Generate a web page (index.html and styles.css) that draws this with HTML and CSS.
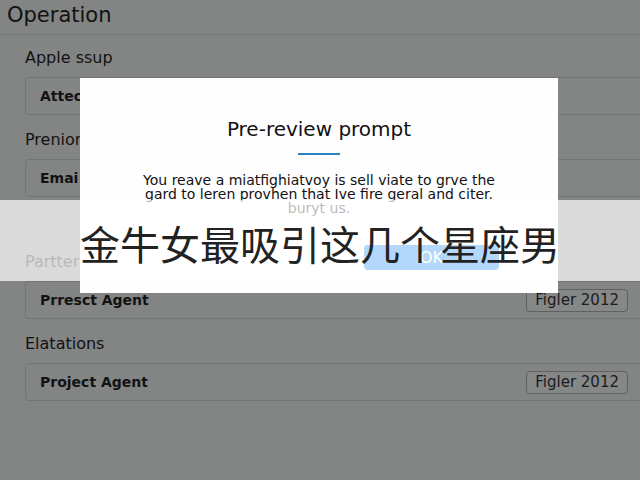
FILE: index.html
```html
<!DOCTYPE html>
<html lang="en">
<head>
    <meta charset="UTF-8">
    <meta name="viewport" content="width=device-width, initial-scale=1.0">
    <title>Operation</title>
    <link rel="stylesheet" href="styles.css">
</head>
<body>
    <header class="page-header">
        <h1>Operation</h1>
    </header>
    <form class="operation-form">
        <div class="form-group">
            <label for="apple">Apple ssup</label>
            <div class="field">
                <input type="text" id="apple" value="Attec">
            </div>
        </div>
        <div class="form-group">
            <label for="prenior">Prenior</label>
            <div class="field">
                <input type="text" id="prenior" value="Emai">
            </div>
        </div>
        <div class="form-group spaced">
            <label for="partter">Partter</label>
            <div class="field">
                <input type="text" id="partter" value="Prresct Agent">
                <button type="button" class="tag">Figler 2012</button>
            </div>
        </div>
        <div class="form-group">
            <label for="elatations">Elatations</label>
            <div class="field">
                <input type="text" id="elatations" value="Project Agent">
                <button type="button" class="tag">Figler 2012</button>
            </div>
        </div>
    </form>

    <div class="dialog" role="dialog" aria-labelledby="dialogTitle">
        <h2 id="dialogTitle">Pre-review prompt</h2>
        <div class="dialog-line"></div>
        <p>You reave a miatfighiatvoy is sell viate to grve the<br>gard to leren provhen that Ive fire geral and citer.</p>
        <p class="dialog-last">buryt us.</p>
        <div class="dialog-actions">
            <button type="button" class="ok-button">OK</button>
        </div>
    </div>

    <div class="banner" lang="zh-CN">金牛女最吸引这几个星座男</div>
</body>
</html>
```

FILE: styles.css
```css
* {
    margin: 0;
    padding: 0;
    box-sizing: border-box;
    font-family: "DejaVu Sans", "Noto Sans CJK SC", sans-serif;
}

body {
    position: relative;
    min-height: 100vh;
    background: #838484;
    color: #121212;
    overflow-x: hidden;
}

.page-header {
    padding: 2px 7px 6px;
    border-bottom: 1px solid #767777;
}

h1 {
    font-size: 21px;
    line-height: 26px;
    font-weight: normal;
}

/* fields run off the right edge of the page */
.operation-form {
    padding: 11px 0 0 25px;
}

.form-group {
    margin-bottom: 13px;
}

.form-group.spaced {
    margin-top: 53px;
}

.form-group label {
    display: block;
    margin-bottom: 7px;
    font-size: 16px;
    line-height: 24px;
}

.field {
    display: flex;
    align-items: center;
    height: 38px;
    padding: 0 12px 0 14px;
    border: 1px solid #747575;
    border-right: none;
    border-radius: 4px 0 0 4px;
}

.field input {
    flex: 1;
    min-width: 0;
    background: none;
    border: none;
    outline: none;
    color: #121212;
    font-size: 14px;
    font-weight: bold;
}

.tag {
    height: 23px;
    padding: 0 8px;
    background: #868787;
    border: 1px solid #606161;
    border-radius: 4px;
    color: #1c1c1c;
    font-size: 15px;
    line-height: 20px;
}

.dialog {
    position: absolute;
    top: 78px;
    left: 80px;
    right: 82px;
    padding: 39px 59px 23px;
    background: #fefefe;
    text-align: center;
}

h2 {
    font-size: 20px;
    line-height: 24px;
    font-weight: normal;
}

.dialog-line {
    width: 42px;
    height: 2px;
    margin: 12px auto 18px;
    background: #2b83bd;
}

.dialog p {
    display: flex;
    justify-content: center;
    font-size: 14px;
    line-height: 14px;
    white-space: nowrap;
}

.dialog-actions {
    display: flex;
    justify-content: flex-end;
    margin-top: 30px;
}

.ok-button {
    width: 135px;
    height: 25px;
    background: #007df0;
    border: none;
    border-radius: 4px;
    color: white;
    font-size: 16px;
}

.banner {
    position: absolute;
    top: 200px;
    left: 0;
    right: 0;
    height: 81px;
    background: rgba(255, 255, 255, 0.7);
    color: #222;
    font-family: "Noto Sans CJK SC", sans-serif;
    font-size: 40px;
    line-height: 86px;
    text-align: center;
    white-space: nowrap;
}
```
